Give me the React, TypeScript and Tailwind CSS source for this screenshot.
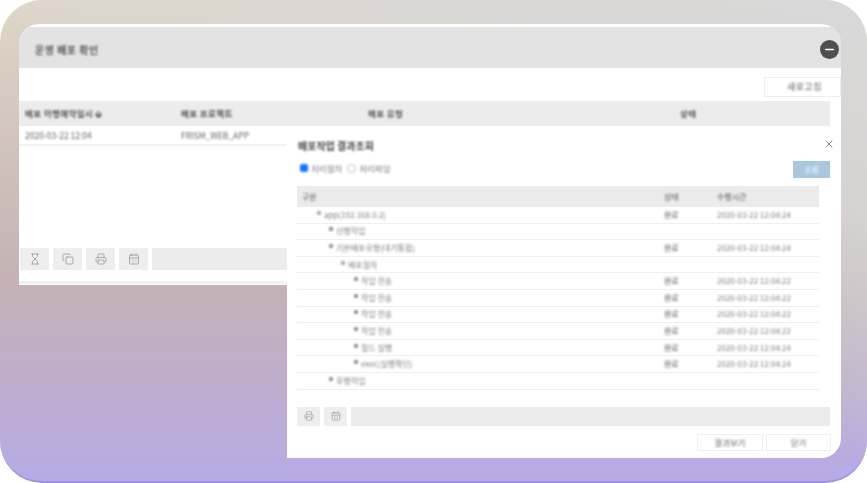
import React from "react";
import { Hourglass, Copy, Printer, CalendarDays, Minus, X } from "lucide-react";

const font = "font-['Noto_Sans_CJK_KR','Noto_Sans',sans-serif]";

const rows: { depth: number; label: string; sign: "minus" | "plus"; status?: string; time?: string }[] = [
  { depth: 0, sign: "minus", label: "app(192.168.0.2)", status: "완료", time: "2020-03-22 12:04:24" },
  { depth: 1, sign: "plus", label: "선행작업" },
  { depth: 1, sign: "plus", label: "기본배포유형(대기통합)", status: "완료", time: "2020-03-22 12:04:24" },
  { depth: 2, sign: "minus", label: "배포절차" },
  { depth: 3, sign: "plus", label: "작업 전송", status: "완료", time: "2020-03-22 12:04:22" },
  { depth: 3, sign: "plus", label: "작업 전송", status: "완료", time: "2020-03-22 12:04:22" },
  { depth: 3, sign: "plus", label: "작업 전송", status: "완료", time: "2020-03-22 12:04:22" },
  { depth: 3, sign: "plus", label: "작업 전송", status: "완료", time: "2020-03-22 12:04:22" },
  { depth: 3, sign: "plus", label: "필드 실행", status: "완료", time: "2020-03-22 12:04:24" },
  { depth: 3, sign: "plus", label: "exec(실행확인)", status: "완료", time: "2020-03-22 12:04:24" },
  { depth: 1, sign: "plus", label: "후행작업" },
];

const indents = ["pl-[20px]", "pl-[32px]", "pl-[44px]", "pl-[57px]"];

function ToolButton({ children, wide }: { children: React.ReactNode; wide?: boolean }) {
  return (
    <div className={`flex items-center justify-center bg-[#eeeeee] text-[#a8a8a8] ${wide ? "w-[29px]" : "w-[23px]"}`}>
      {children}
    </div>
  );
}

export default function App() {
  return (
    <div className="h-[483px] w-[867px] bg-white">
      <div
        className={`relative h-[483px] w-[867px] overflow-hidden rounded-[42px] border-b-2 border-[#a091e0] bg-[linear-gradient(205deg,#d8d8d8_0%,#d8d8d8cc_25%,#d8d8d800_52%),linear-gradient(180deg,#dfd6c6_0%,#c4b2b4_58%,#b8aae6_100%)] pt-[24px] pl-[19px] blur-[0.4px] ${font}`}
      >
        <div className="h-[261px] w-[822px] overflow-hidden rounded-t-[20px] bg-white pt-[3px] [&_span]:blur-[0.8px]">
          <div className="flex h-[41px] items-center justify-between bg-[#e4e3e4] pt-[3px] pr-[2px] pl-[16px]">
            <span className="text-[10px] font-bold tracking-[0.5px] text-[#555]">운영 배포 확인</span>
            <div className="flex h-[19px] w-[19px] items-center justify-center rounded-full bg-[#4f4f4f] text-white blur-[0.5px]">
              <Minus size={13} strokeWidth={3} />
            </div>
          </div>
          <div className="flex h-[33px] items-start justify-end pt-[9px]">
            <div className="flex h-[20px] w-[77px] items-center justify-center border border-[#eeeeee] pl-[4px] text-[9px] tracking-[0.5px] text-[#666]">
              <span>새로고침</span>
            </div>
          </div>
          <div className="grid h-[25px] w-[811px] grid-cols-[156px_187px_312px_1fr] items-center bg-[#ececec] pl-[6px] text-[8.5px] font-bold tracking-[0.4px] text-[#555]">
            <span>배포 이행예약일시 ⬙</span>
            <span>배포 프로젝트</span>
            <span>배포 유형</span>
            <span>상태</span>
          </div>
          <div className="grid h-[20px] w-[268px] grid-cols-[156px_1fr] items-center border-b-2 border-[#f2f2f2] pl-[6px] text-[8.5px] text-[#666]">
            <span>2020-03-22 12:04</span>
            <span>FRISM_WEB_APP</span>
          </div>
          <div className="mt-[102px] flex h-[22px] gap-[4px] pl-[1px]">
            <ToolButton wide><Hourglass size={12} /></ToolButton>
            <ToolButton wide><Copy size={12} /></ToolButton>
            <ToolButton wide><Printer size={12} /></ToolButton>
            <ToolButton wide><CalendarDays size={12} /></ToolButton>
            <div className="flex-1 bg-[#ececec]" />
          </div>
          <div className="mt-[11px] h-[3px] bg-[#efefef]" />
        </div>

        <div className="absolute top-[127px] left-[287px] flex h-[331px] w-[554px] flex-col rounded-br-[20px] bg-white [&_span]:blur-[0.8px]">
          <div className="flex h-[26px] items-end justify-between pr-[6px] pl-[11px]">
            <span className="text-[10px] font-bold text-[#444]">배포작업 결과조회</span>
            <div className="mb-[3px] text-[#666] blur-[0.5px]"><X size={12} strokeWidth={1.5} /></div>
          </div>
          <div className="flex h-[33px] items-start justify-between pt-[8px] pr-[11px] pl-[13px]">
            <div className="flex items-center gap-[3px] pt-[1px] text-[8.5px] text-[#777]">
              <span className="h-[8px] w-[8px] rounded-[2px] bg-[#1677ff]" />
              <span>처리절차</span>
              <span className="ml-[2px] h-[9px] w-[9px] rounded-full border border-[#bbbbbb]" />
              <span>처리파일</span>
            </div>
            <div className="flex h-[17px] w-[37px] items-center justify-center bg-[#a9c8e0] text-[8px] text-white">
              <span>조회</span>
            </div>
          </div>
          <div className="ml-[10px] w-[522px]">
            <div className="grid h-[21px] grid-cols-[362px_53px_1fr] items-center bg-[#ebebeb] pl-[5px] text-[8px] text-[#555]">
              <span>구분</span>
              <span>상태</span>
              <span>수행시간</span>
            </div>
            {rows.map((r, i) => (
              <div
                key={i}
                className="grid h-[16.6px] grid-cols-[367px_53px_1fr] items-center border-b border-[#efefef] text-[8px] text-[#808080]"
              >
                <div className={`flex items-center gap-[3px] ${indents[r.depth]}`}>
                  <span className={`relative -top-[2px] h-[4px] w-[4px] ${r.sign === "plus" ? "bg-[#999999]" : "bg-[#b0b0b0]"}`} />
                  <span>{r.label}</span>
                </div>
                <span className="text-[#555]">{r.status}</span>
                <span>{r.time}</span>
              </div>
            ))}
          </div>
          <div className="mt-[17px] flex h-[19px] gap-[4px] pr-[11px] pl-[10px]">
            <ToolButton><Printer size={10} /></ToolButton>
            <ToolButton><CalendarDays size={10} /></ToolButton>
            <div className="flex-1 bg-[#ebebeb]" />
          </div>
          <div className="mt-[8px] flex justify-end gap-[3px] pr-[10px]">
            <div className="flex h-[17px] w-[66px] items-center justify-center border border-[#f0f0f0] text-[8.5px] text-[#666]"><span>결과보기</span></div>
            <div className="flex h-[17px] w-[65px] items-center justify-center border border-[#f0f0f0] text-[8.5px] text-[#666]"><span>닫기</span></div>
          </div>
        </div>
      </div>
    </div>
  );
}
